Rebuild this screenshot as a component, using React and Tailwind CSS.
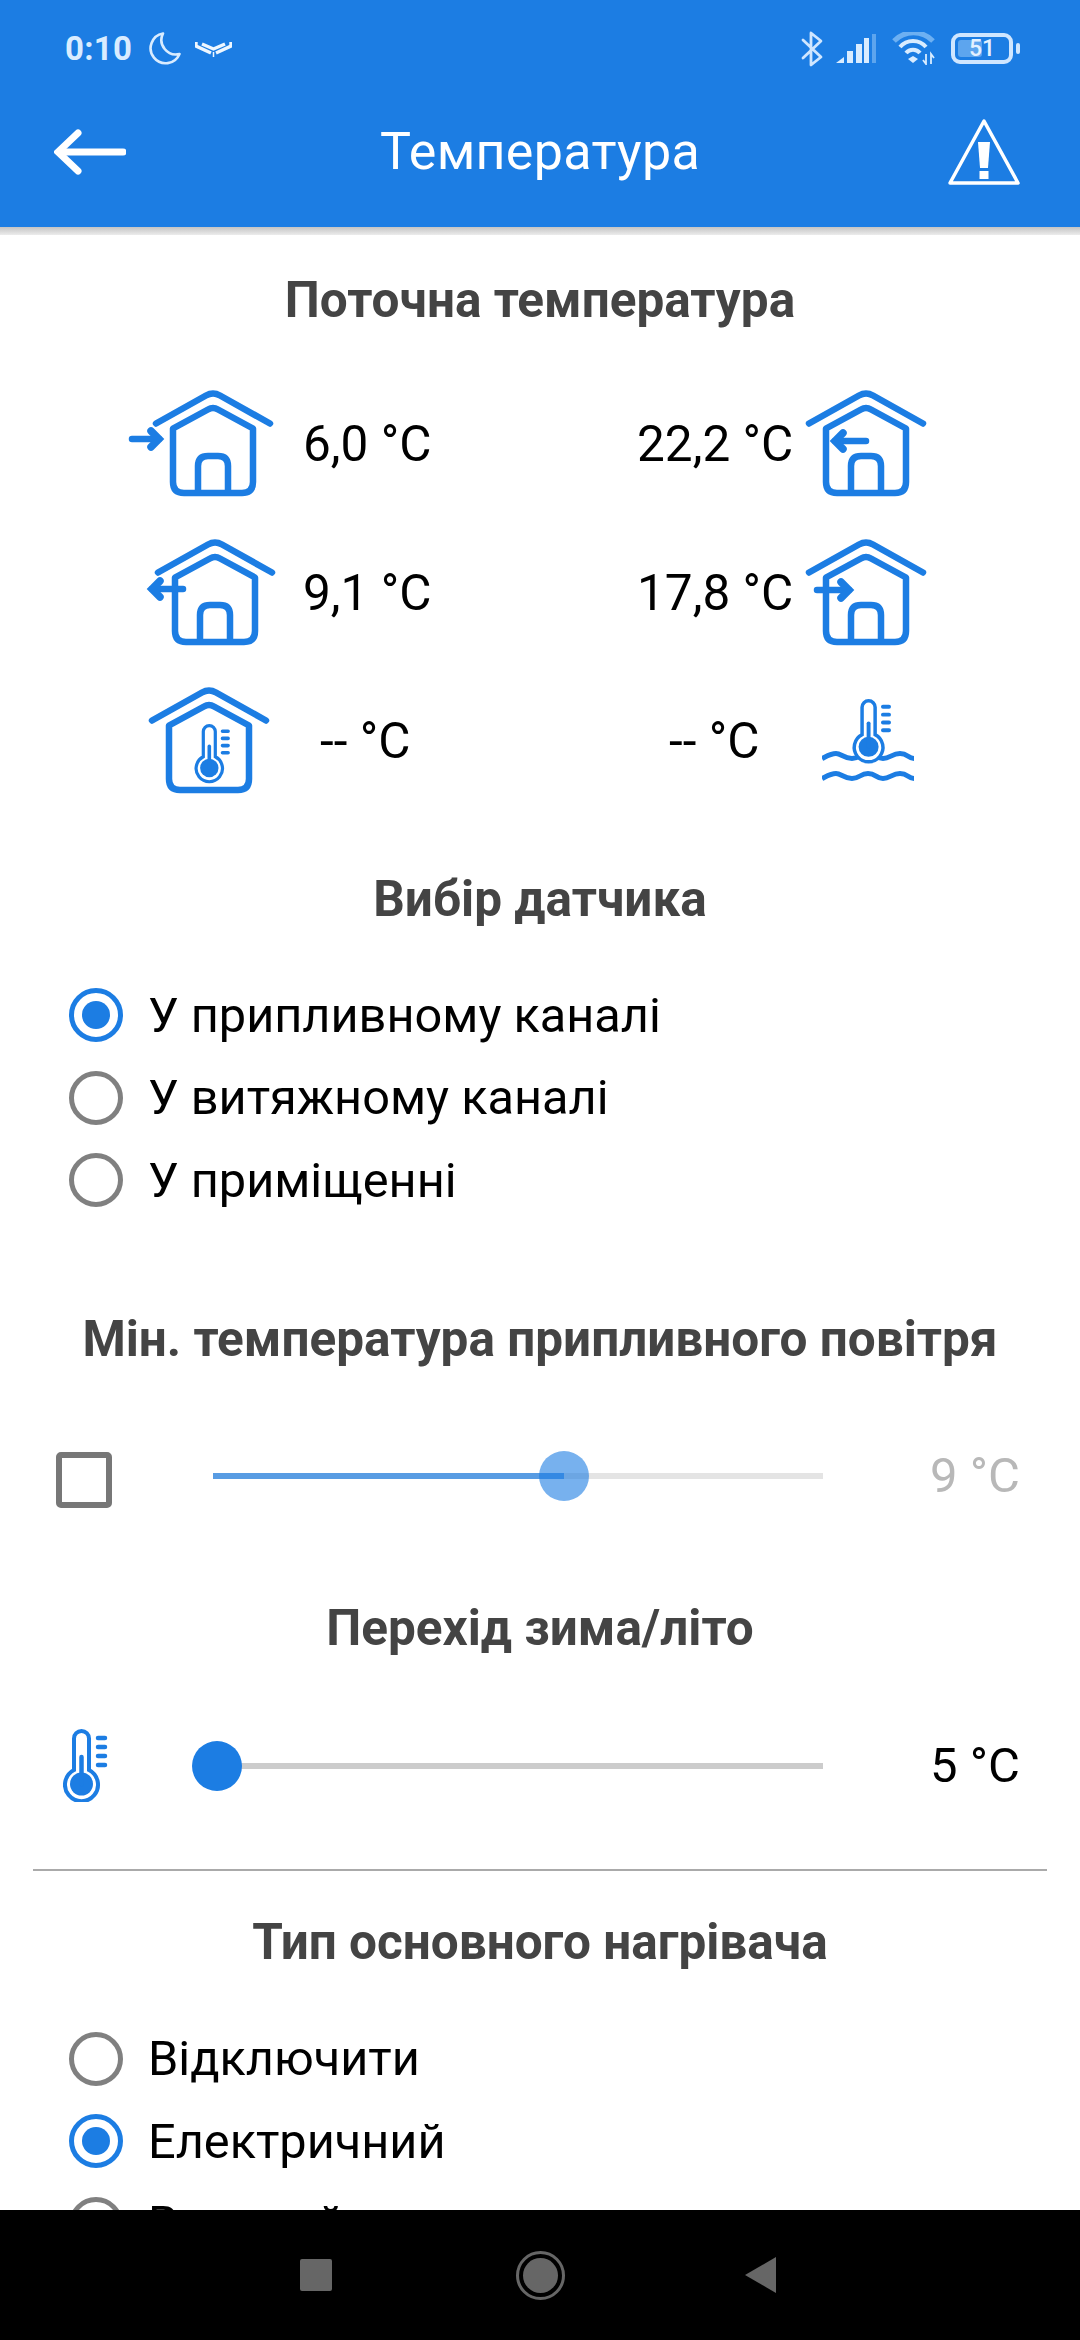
const BLUE = "#1c7de3";

function Thermo({ x = 0, y = 0, s = 1, color = BLUE }) {
  return (
    <g transform={`translate(${x} ${y}) scale(${s})`} fill="none" stroke={color} strokeLinecap="round">
      <path d="M11 41V9.5A7.5 7.5 0 0 1 26 9.5V41A16.5 16.5 0 1 1 11 41Z" strokeWidth="4" fill="#fff" />
      <circle cx="18.5" cy="55" r="11.5" fill={color} stroke="none" />
      <path d="M18.5 28V55" strokeWidth="4.5" />
      <path d="M35 9H42M35 18H42M35 27H42M35 36H42" strokeWidth="4.5" />
    </g>
  );
}

function HouseArrow({ x0, x1, y }) {
  const dir = x1 > x0 ? 1 : -1;
  const tip = x1 - dir * 4;
  return (
    <g fill="none" stroke={BLUE} strokeWidth="6.5" strokeLinecap="round">
      <path d={`M${x0} ${y}H${tip}`} />
      <path d={`M${tip - dir * 8} ${y - 8}L${tip} ${y}L${tip - dir * 8} ${y + 8}`} strokeWidth="7.5" strokeLinejoin="miter" />
    </g>
  );
}

function House({ children }) {
  return (
    <svg width="120" height="108" viewBox="0 0 120 108" className="overflow-visible shrink-0">
      <g fill="none" stroke={BLUE} strokeWidth="6.5" strokeLinecap="round" strokeLinejoin="round">
        <path d="M3 33.500L53 5.500Q60 1.500 67 5.500L117 33.500" />
        <path d="M20 38.500L55 19.500Q60 16.500 65 19.500L100 38.500V92Q100 103 89 103H31Q20 103 20 92Z" />
      </g>
      {children}
    </svg>
  );
}

function Door() {
  return <path d="M45 103V76Q45 66 55 66H65Q75 66 75 76V103" fill="none" stroke={BLUE} strokeWidth="6.5" />;
}

function Water() {
  return (
    <svg width="92" height="84" viewBox="0 0 92 84" className="shrink-0">
      <path d="M0 59.500C5 57 9 54.500 14 54.500S22 59.500 30 59.500S38 54.500 46 54.500S54 59.500 61 59.500S70 54.500 78 54.500S86 59.500 92 59.500" fill="none" stroke={BLUE} strokeWidth="5" />
      <path d="M0 79.500C5 77 9 74.500 14 74.500S22 79.500 30 79.500S38 74.500 46 74.500S54 79.500 61 79.500S70 74.500 78 74.500S86 79.500 92 79.500" fill="none" stroke={BLUE} strokeWidth="5" />
      <Thermo x={30.5} y={0} s={0.87} />
    </svg>
  );
}

function Heading({ children, className = "" }) {
  return (
    <div className={`h-[60px] flex items-center justify-center whitespace-nowrap text-[49.500px] font-bold text-[#444444] ${className}`}>
      {children}
    </div>
  );
}

function Radio({ label, checked }) {
  return (
    <div className="h-[82.500px] flex items-center pl-[69px]">
      <div
        className={`w-[54px] h-[54px] rounded-full border-[5px] flex items-center justify-center ${checked ? "border-[#1c7de3]" : "border-[#808080]"}`}
      >
        {checked && <div className="w-[28px] h-[28px] rounded-full bg-[#1c7de3]" />}
      </div>
      <span className="ml-[25px] text-[48.700px] text-black">{label}</span>
    </div>
  );
}

function TempText({ children, className = "" }) {
  return <span className={`text-[49.500px] text-black whitespace-nowrap ${className}`}>{children}</span>;
}

export default function App() {
  return (
    <div className="relative w-[1080px] h-[2340px] bg-white overflow-hidden font-['Roboto',sans-serif]">
      <div className="absolute top-0 right-0 w-px h-[75px] bg-black" />
      <header className="relative h-[227px] bg-[#1c7de3]">
        <div className="h-[97px] flex items-center pl-[65px] pr-[60px] text-[#d9ecff]">
          <span className="text-[33px] font-bold tracking-[0.3px]">0:10</span>
          <svg width="34" height="36" viewBox="0 0 34 36" className="ml-[16px]" fill="none" stroke="#d9ecff" strokeWidth="2.6">
            <path d="M15 2.500A15 15 0 1 0 31.500 23A14.500 14.500 0 0 1 15 2.500Z" strokeLinejoin="round" />
          </svg>
          <svg width="37" height="18" viewBox="0 0 37 18" className="ml-[13px]" fill="none" stroke="#eef7ff">
            <path d="M1 2V6L16 13M36 2V6L21 13" strokeWidth="3.400" />
            <path d="M7 4L18.500 9L30 4" strokeWidth="3.400" />
            <path d="M18.500 12V17" strokeWidth="1.500" />
          </svg>
          <svg width="22" height="36" viewBox="0 0 22 36" className="ml-auto" fill="none" stroke="#cfe6ff" strokeWidth="2.8" strokeLinejoin="round" strokeLinecap="round">
            <path d="M2 9L20 26L10 34V2L20 10L2 27" />
          </svg>
          <svg width="40" height="30" viewBox="0 0 40 30" className="ml-[13px]">
            <path d="M0 29L8 23V29Z" fill="#d9ecff" />
            <rect x="11" y="17" width="6" height="12" fill="#d9ecff" />
            <rect x="20" y="10" width="6" height="19" fill="#d9ecff" />
            <rect x="28" y="4" width="5" height="25" fill="#d9ecff" />
            <rect x="36" y="0" width="4" height="29" fill="#5da5ee" />
          </svg>
          <svg width="44" height="33" viewBox="0 0 44 33" className="ml-[16px]" fill="none" strokeLinecap="butt">
            <path d="M2 9A27 27 0 0 1 41 9" stroke="#6db0f2" strokeWidth="5" />
            <path d="M8 15A17 17 0 0 1 34 15" stroke="#d9ecff" strokeWidth="4" />
            <path d="M14 21A9 9 0 0 1 28 21" stroke="#d9ecff" strokeWidth="4" />
            <path d="M16 27L21 24L26 27L21 31Z" fill="#d9ecff" />
            <path d="M34 22V32L31 28M39 32V22L42 26" stroke="#d9ecff" strokeWidth="1.800" />
          </svg>
          <div className="relative ml-[15px] w-[62px] h-[31px] rounded-[9px] border-[4px] border-[#cfe6ff] flex items-center justify-center">
            <div className="absolute left-[3px] top-[3px] bottom-[3px] w-[24px] rounded-[3px] bg-[#5da5ee]" />
            <span className="relative text-[23px] leading-none font-medium text-[#e4f1ff]">51</span>
          </div>
          <div className="ml-[3px] w-[4px] h-[11px] rounded-full bg-[#cfe6ff]" />
        </div>
        <div className="h-[110px] flex items-center pl-[54px] pr-[59px] text-white">
          <svg width="72" height="46" viewBox="0 0 72 46" className="shrink-0" fill="none" stroke="#fff" strokeLinecap="round" strokeLinejoin="miter">
            <path d="M69 23H6" strokeWidth="7" />
            <path d="M24 4L4 23L24 42" strokeWidth="7" />
          </svg>
          <span className="ml-[254px] text-[52px] tracking-[0.3px]">Температура</span>
          <svg width="74" height="68" viewBox="0 0 74 68" className="ml-auto shrink-0">
            <path d="M37 3L71 65H3Z" fill="none" stroke="#fff" strokeWidth="3.500" strokeLinejoin="round" />
            <path d="M31 24H43L41 50H33Z" fill="#fff" />
            <rect x="32.500" y="53" width="9" height="8" fill="#fff" />
          </svg>
        </div>
      </header>
      <div className="h-[8px] bg-gradient-to-b from-[#c4c4c4] to-[#ececec]" />

      <main className="h-[1983px] overflow-hidden -mt-[8px]">
        <Heading className="mt-[43px]">Поточна температура</Heading>

        <div className="mt-[54px] h-[120px] flex items-center">
          <div className="w-[600px] flex items-center pl-[153px]">
            <House>
              <Door />
              <HouseArrow x0={-21} x1={10} y={49} />
            </House>
            <TempText className="ml-[30px]">6,0 °C</TempText>
          </div>
          <div className="flex items-center pl-[37px]">
            <TempText>22,2 °C</TempText>
            <div className="ml-[13px]">
              <House>
                <Door />
                <HouseArrow x0={60} x1={25} y={51} />
              </House>
            </div>
          </div>
        </div>

        <div className="mt-[29px] h-[120px] flex items-center">
          <div className="w-[600px] flex items-center pl-[155px]">
            <House>
              <Door />
              <HouseArrow x0={28} x1={-7} y={50} />
            </House>
            <TempText className="ml-[28px]">9,1 °C</TempText>
          </div>
          <div className="flex items-center pl-[37px]">
            <TempText>17,8 °C</TempText>
            <div className="ml-[13px]">
              <House>
                <Door />
                <HouseArrow x0={11} x1={47} y={51} />
              </House>
            </div>
          </div>
        </div>

        <div className="mt-[28px] h-[120px] flex items-center">
          <div className="w-[600px] flex items-center pl-[149px]">
            <House>
              <Thermo x={45.5} y={37} s={0.8} />
            </House>
            <TempText className="ml-[51px]">-- °C</TempText>
          </div>
          <div className="flex items-center pl-[69px]">
            <TempText>-- °C</TempText>
            <div className="ml-[63px]">
              <Water />
            </div>
          </div>
        </div>

        <Heading className="mt-[68px]">Вибір датчика</Heading>
        <div className="mt-[45px]">
          <Radio label="У припливному каналі" checked />
          <Radio label="У витяжному каналі" />
          <Radio label="У приміщенні" />
        </div>

        <Heading className="mt-[88px]">Мін. температура припливного повітря</Heading>

        <div className="mt-[76px] h-[60px] flex items-center pl-[56px]">
          <div className="mt-[8px] w-[56px] h-[56px] rounded-[5px] border-[6px] border-[#777777] shrink-0" />
          <div className="relative ml-[101px] w-[610px] h-[6px] bg-[#e4e4e4]">
            <div className="absolute left-0 top-0 h-full w-[351px] bg-[#1c7de3] opacity-70" />
            <div className="absolute left-[326px] -top-[22px] w-[50px] h-[50px] rounded-full bg-[#1c7de3] opacity-60" />
          </div>
          <span className="ml-auto pr-[60px] text-[49px] text-[#b8b8b8]">9 °C</span>
        </div>

        <Heading className="mt-[93px]">Перехід зима/літо</Heading>

        <div className="mt-[67px] h-[80px] flex items-center pl-[63px]">
          <svg width="45" height="73" viewBox="0 0 45 73" className="shrink-0">
            <Thermo />
          </svg>
          <div className="relative ml-[109px] w-[606px] h-[6px] bg-[#cccccc]">
            <div className="absolute -left-[25px] -top-[22px] w-[50px] h-[50px] rounded-full bg-[#1c7de3]" />
          </div>
          <span className="ml-auto pr-[60px] text-[49px] text-black">5 °C</span>
        </div>

        <div className="mt-[63px] mx-[33px] h-[2px] bg-[#aaaaaa]" />

        <Heading className="mt-[42px]">Тип основного нагрівача</Heading>
        <div className="mt-[45px]">
          <Radio label="Відключити" />
          <Radio label="Електричний" checked />
          <Radio label="Водяний" />
        </div>
      </main>

      <nav className="h-[130px] bg-black flex items-center pl-[300px]">
        <div className="w-[32px] h-[32px] rounded-[2px] bg-[#666666]" />
        <div className="ml-[184px] w-[49px] h-[49px] rounded-full border-[3px] border-[#666666] flex items-center justify-center">
          <div className="w-[35px] h-[35px] rounded-full bg-[#666666]" />
        </div>
        <svg width="31" height="36" viewBox="0 0 31 36" className="ml-[180px]">
          <path d="M31 0V36L0 18Z" fill="#666666" />
        </svg>
      </nav>
    </div>
  );
}
